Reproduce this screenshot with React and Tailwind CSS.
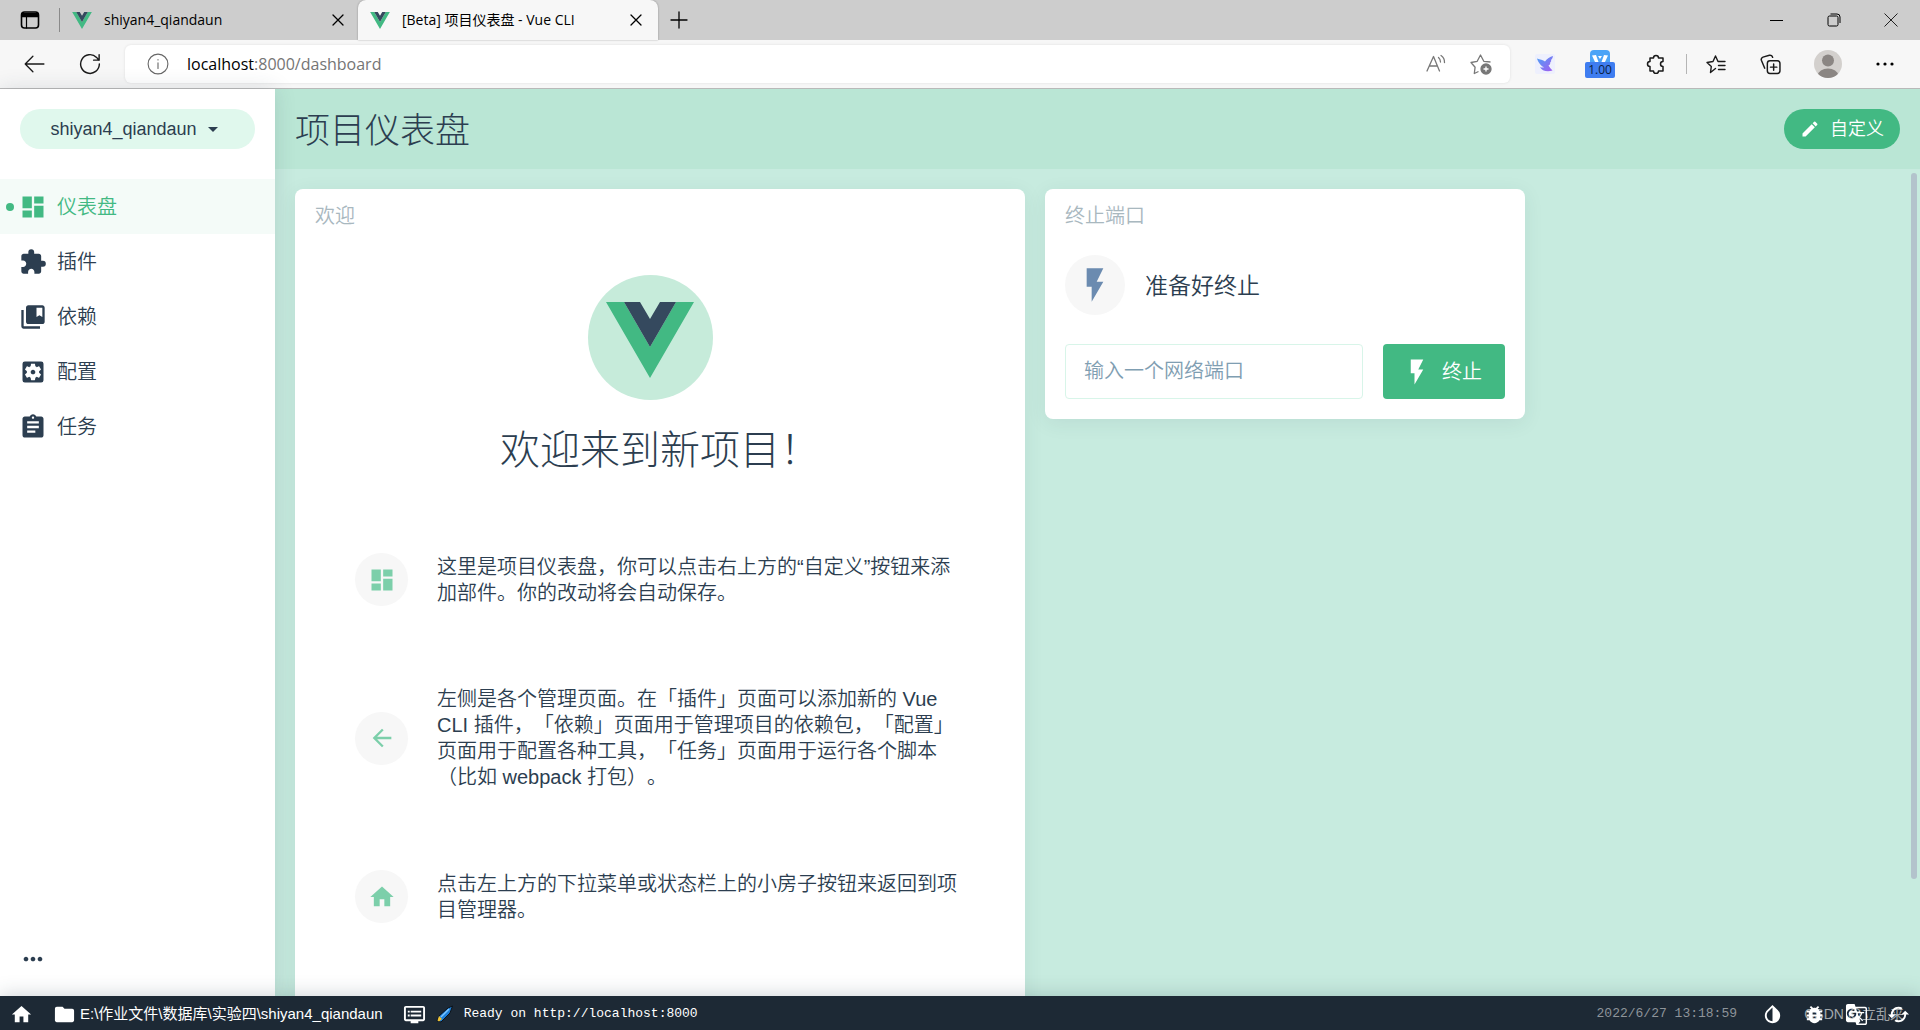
import React, { useState } from "react";
import {
  MdDashboard,
  MdExtension,
  MdCollectionsBookmark,
  MdSettingsApplications,
  MdAssignment,
  MdMoreHoriz,
  MdHome,
  MdFolder,
  MdDvr,
  MdInvertColors,
  MdBugReport,
  MdGTranslate,
  MdCached,
  MdEdit,
  MdFlashOn,
  MdArrowBack,
  MdArrowDropDown,
} from "react-icons/md";

const menu = [
  { id: "dashboard", label: "仪表盘", icon: MdDashboard },
  { id: "plugins", label: "插件", icon: MdExtension },
  { id: "dependencies", label: "依赖", icon: MdCollectionsBookmark },
  { id: "configuration", label: "配置", icon: MdSettingsApplications },
  { id: "tasks", label: "任务", icon: MdAssignment },
];

const tips = [
  {
    id: 1,
    icon: MdDashboard,
    text: "这里是项目仪表盘，你可以点击右上方的“自定义”按钮来添加部件。你的改动将会自动保存。",
  },
  {
    id: 2,
    icon: MdArrowBack,
    text: "左侧是各个管理页面。在「插件」页面可以添加新的 Vue CLI 插件，「依赖」页面用于管理项目的依赖包，「配置」页面用于配置各种工具，「任务」页面用于运行各个脚本（比如 webpack 打包）。",
  },
  {
    id: 3,
    icon: MdHome,
    text: "点击左上方的下拉菜单或状态栏上的小房子按钮来返回到项目管理器。",
  },
];

const VueLogo = ({ className }) => (
  <svg viewBox="0 0 88 76" className={className} aria-hidden="true">
    <path d="M0 0h18l26 45L70 0h18L44 76z" fill="#42b983" />
    <path d="M18 0h16l10 17L54 0h16L44 45z" fill="#35495e" />
  </svg>
);

// thin stroked icon used in the browser bar
const Line = ({ size = 20, width = 1.3, children }) => (
  <svg
    width={size}
    height={size}
    viewBox="0 0 20 20"
    fill="none"
    stroke="currentColor"
    strokeWidth={width}
    strokeLinecap="round"
    strokeLinejoin="round"
    aria-hidden="true"
  >
    {children}
  </svg>
);

const CloseIcon = ({ size = 20 }) => (
  <Line size={size}>
    <path d="M5 5l10 10M15 5L5 15" />
  </Line>
);

const TabBar = () => (
  <div className="flex h-10 shrink-0 items-stretch bg-[#cdcdcd] text-sm text-black">
    <button aria-label="Tab actions" className="flex w-[59px] items-center justify-center">
      <Line size={20} width={1.6}>
        <rect x="1.5" y="2" width="17" height="16" rx="3" />
        <path d="M2 3.5h16v3H2z" fill="currentColor" />
        <path d="M6.5 7v11" strokeWidth="1.2" />
      </Line>
    </button>
    <div className="my-2 w-px bg-[#8a8a8a]" />
    <div className="flex w-[298px] items-center pr-2.5 pl-3">
      <VueLogo className="h-[17px] w-5" />
      <span className="ml-3 flex-1">shiyan4_qiandaun</span>
      <button aria-label="Close tab">
        <CloseIcon />
      </button>
    </div>
    <div className="flex w-[300px] items-center rounded-t-lg bg-[#f7f7f7] px-3 shadow-[0_0_2px_rgba(0,0,0,0.35)]">
      <VueLogo className="h-[17px] w-5" />
      <span className="ml-3 flex-1">[Beta] 项目仪表盘 - Vue CLI</span>
      <button aria-label="Close tab">
        <CloseIcon />
      </button>
    </div>
    <button aria-label="New tab" className="flex w-[42px] items-center justify-center">
      <Line>
        <path d="M10 2v16M2 10h16" />
      </Line>
    </button>
    <div className="ml-auto flex">
      <button aria-label="Minimize" className="flex w-[57px] items-center justify-center">
        <svg width="13" height="13" viewBox="0 0 13 13" stroke="#000">
          <path d="M0 6.5h13" />
        </svg>
      </button>
      <button aria-label="Restore" className="flex w-[57px] items-center justify-center">
        <svg width="14" height="14" viewBox="0 0 14 14" fill="none" stroke="#000">
          <rect x="1" y="3" width="10" height="10" rx="1.5" />
          <path d="M3.5 1H10a3 3 0 0 1 3 3v6" />
        </svg>
      </button>
      <button aria-label="Close window" className="flex w-[58px] items-center justify-center">
        <svg width="14" height="14" viewBox="0 0 14 14" stroke="#222">
          <path d="M.5.5l13 13M13.5.5l-13 13" />
        </svg>
      </button>
    </div>
  </div>
);

const AddressBar = () => (
  <div className="flex h-[49px] shrink-0 items-center border-b border-[#b9b9b9] bg-[#f7f7f7] text-[#1a1a1a]">
    <button aria-label="Back" className="ml-4 flex w-9 justify-center">
      <Line size={22} width={1.2}>
        <path d="M19 10H2M9 3l-7 7 7 7" />
      </Line>
    </button>
    <button aria-label="Refresh" className="ml-5 flex w-9 justify-center">
      <Line size={22} width={1.3}>
        <path d="M18.5 10a8.5 8.5 0 1 1-2.5-6l2 2.5M18.3 1.5v5h-5" />
      </Line>
    </button>
    <div className="ml-[17px] flex h-[38px] flex-1 items-center rounded-md bg-white pr-[18px] pl-[22px] shadow-[0_0_3px_rgba(0,0,0,0.1)]">
      <span className="text-[#666]">
        <Line size={22} width={1}>
          <circle cx="10" cy="10" r="9" />
          <path d="M10 9v5M10 6v.3" />
        </Line>
      </span>
      <span className="ml-[18px] flex-1 text-base text-[#757575]">
        <span className="text-black">localhost</span>:8000/dashboard
      </span>
      <button aria-label="Read aloud" className="mr-6 text-[#777]">
        <Line>
          <path d="M1 17L7.5 2.5 13.5 17M3.3 12h8.2M12.5 3.5a6 6 0 0 1 2 4.5M15 1.5a8 8 0 0 1 3.5 7" />
        </Line>
      </button>
      <button aria-label="Add to favorites" className="text-[#777]">
        <svg width="22" height="22" viewBox="0 0 22 22" fill="none" stroke="currentColor" strokeWidth="1.3" strokeLinejoin="round">
          <path d="M8.5 18.5L4.3 20.5l.8-6.3L1 9.5l6.2-1.2L10.5 2l3.3 6.3L20.5 9" />
          <circle cx="16" cy="16" r="5" fill="currentColor" />
          <path d="M16 13.5v5M13.5 16h5" stroke="#fff" />
        </svg>
      </button>
    </div>
    <div className="flex items-center">
      <button aria-label="Bird extension" className="ml-[25px] flex h-5 w-5 items-center justify-center rounded-xs bg-[#eef0fd]">
        <svg width="18" height="18" viewBox="0 0 18 18">
          <defs>
            <linearGradient id="bird" x1="0" y1="0" x2="1" y2="1">
              <stop offset="0" stopColor="#4aa3f5" />
              <stop offset="1" stopColor="#a45cf0" />
            </linearGradient>
          </defs>
          <path
            d="M1 3.5C4 4.5 7 5 9 6.5 11 3.5 14 2 17 1c-.3 2-1 3-2 4 .5 1 .2 1.5-.8 2.5.3 1.500-.7 2.500-1.700 3 1.200 2 2.500 3.500 4 5-5 1.500-11 .5-12.500-3.500 1.500.7 3 .7 4 .2C5.500 11.500 2.500 8 1 3.500z"
            fill="url(#bird)"
          />
        </svg>
      </button>
      <button aria-label="Speed extension" className="ml-[30px] flex w-[30px] flex-col items-center">
        <svg width="20" height="12" viewBox="0 0 20 12">
          <path d="M0 12V4a4 4 0 0 1 4-4h12a4 4 0 0 1 4 4v8z" fill="#4ba4f7" />
          <path d="M2 5.500l4-.5 2.500 7H5zM18 5.500L14 5l-2.500 7H15z" fill="#fff" />
          <path d="M8 6h4l-2 3z" fill="#fff" />
        </svg>
        <span className="w-full rounded-xs bg-[#3f7df0] text-xs leading-4 text-[#0a1f44]">1.00</span>
      </button>
      <button aria-label="Extensions" className="ml-[31px]">
        <Line size={20} width={1.5}>
          <path d="M4 4h3.500a2.500 2.500 0 0 1 5 0H17v3.500a2.500 2.500 0 1 0 0 5V17h-4.500a2.500 2.500 0 0 1-5 0H4v-4.500a2.500 2.500 0 0 1 0-5z" />
        </Line>
      </button>
      <div className="ml-5 h-5 w-px bg-[#b5b5b5]" />
      <button aria-label="Favorites" className="ml-[19px]">
        <Line size={20} width={1.4}>
          <path d="M9.500 14.500L4.500 18.500l.8-6L1 8.500l6-1L9.500 2l2.500 5.500h7M12.500 11.500H19M12.500 15.500H19" />
        </Line>
      </button>
      <button aria-label="Collections" className="ml-[34px]">
        <Line size={21} width={1.4}>
          <rect x="7" y="6.500" width="12" height="12" rx="2.500" />
          <path d="M13 9.500v6M10 12.500h6M4.500 13.500L1.300 6a2.500 2.500 0 0 1 1.500-3L9 1.200a2.500 2.500 0 0 1 3 2" />
        </Line>
      </button>
      <button aria-label="Profile" className="ml-[33px]">
        <svg width="28" height="28" viewBox="0 0 28 28">
          <clipPath id="face">
            <circle cx="14" cy="14" r="14" />
          </clipPath>
          <g clipPath="url(#face)">
            <path d="M0 0h28v28H0z" fill="#d3d0cd" />
            <circle cx="14" cy="10.500" r="6" fill="#8b8683" />
            <ellipse cx="14" cy="25" rx="10" ry="6.500" fill="#8b8683" />
          </g>
        </svg>
      </button>
      <button aria-label="Menu" className="mr-[26px] ml-[34px]">
        <svg width="18" height="4" viewBox="0 0 18 4">
          <circle cx="2" cy="2" r="1.6" />
          <circle cx="9" cy="2" r="1.6" />
          <circle cx="16" cy="2" r="1.6" />
        </svg>
      </button>
    </div>
  </div>
);

const SideBar = ({ active, onSelect }) => (
  <aside className="z-10 flex w-[275px] shrink-0 flex-col bg-white shadow-[0_0_20px_rgba(44,62,80,0.15)]">
    <button className="mx-5 mt-5 flex h-10 items-center justify-center rounded-full bg-[#e0f8ed] text-lg">
      shiyan4_qiandaun
      <MdArrowDropDown size={24} className="ml-1" />
    </button>
    <nav className="mt-[30px]">
      {menu.map(({ id, label, icon: Icon }) => (
        <button
          key={id}
          onClick={() => onSelect(id)}
          className={
            active === id
              ? "flex h-[55px] w-full items-center bg-[#f4fbf8] text-xl font-[350] text-[#42b983]"
              : "flex h-[55px] w-full items-center text-xl font-[350]"
          }
        >
          <span
            className={active === id ? "ml-1.5 h-2 w-2 rounded-full bg-[#42b983]" : "ml-1.5 h-2 w-2"}
          />
          <Icon size={28} className="ml-[5px]" />
          <span className="ml-2.5">{label}</span>
        </button>
      ))}
    </nav>
    <button aria-label="更多" className="mt-auto mb-[23px] ml-[19px] self-start">
      <MdMoreHoriz size={28} />
    </button>
  </aside>
);

const Welcome = () => (
  <section className="w-[730px] shrink-0 rounded-lg bg-white px-5 pb-5 shadow-[0_4px_20px_rgba(44,62,80,0.08)]">
    <h2 className="pt-3 text-xl leading-[30px] font-[350] text-[#a9b8bf]">欢迎</h2>
    <div className="mt-11 flex flex-col items-center">
      <div className="mr-5 flex h-[125px] w-[125px] items-center justify-center rounded-full bg-[#c6ebda]">
        <VueLogo className="mt-1 h-[76px] w-[88px]" />
      </div>
      <h1 className="mt-5 text-[40px] leading-[60px] font-light">欢迎来到新项目！</h1>
    </div>
    <ul className="mt-[60px] pr-[45px] pl-10">
      {tips.map(({ id, icon: Icon, text }) => (
        <li key={id} className="mb-[54px] flex items-center py-[13px]">
          <div className="flex h-[53px] w-[53px] shrink-0 items-center justify-center rounded-full bg-[#f7f7f7]">
            <Icon size={28} className="text-[#7ccfaa]" />
          </div>
          <p className="ml-[29px] text-xl leading-[26px] font-[350] [text-spacing-trim:space-all]">{text}</p>
        </li>
      ))}
    </ul>
  </section>
);

const KillPort = () => {
  const [port, setPort] = useState("");

  return (
    <section className="w-[480px] shrink-0 rounded-lg bg-white px-5 pb-5 shadow-[0_4px_20px_rgba(44,62,80,0.08)]">
      <h2 className="pt-3 text-xl leading-[30px] font-[350] text-[#a9b8bf]">终止端口</h2>
      <div className="mt-6 flex items-center">
        <div className="flex h-[60px] w-[60px] items-center justify-center rounded-full bg-[#f7f7f7]">
          <MdFlashOn size={40} className="text-[#6b8bb0]" />
        </div>
        <span className="ml-5 pt-0.5 text-[23px] font-[350]">准备好终止</span>
      </div>
      <form className="mt-[29px] flex gap-5" onSubmit={(e) => e.preventDefault()}>
        <input
          type="text"
          aria-label="网络端口"
          placeholder="输入一个网络端口"
          value={port}
          onChange={(e) => setPort(e.target.value)}
          className="h-[55px] min-w-0 flex-1 rounded-sm border border-[#d8f5e9] px-[18px] text-xl font-[350] outline-none placeholder:text-[#7f9eb2]"
        />
        <button className="flex h-[55px] w-[122px] items-center justify-center rounded-sm bg-[#42b983] pr-1 text-xl font-[350] text-white">
          <MdFlashOn size={30} className="mr-2.5" />
          终止
        </button>
      </form>
    </section>
  );
};

const StatusBar = () => (
  <footer className="relative z-20 flex h-[34px] shrink-0 items-center bg-[#1d2935] pt-0.5 text-white shadow-[0_0_20px_rgba(44,62,80,0.25)]">
    <button aria-label="项目管理器" className="ml-2.5">
      <MdHome size={23} />
    </button>
    <button className="ml-5 flex items-center text-[15px]">
      <MdFolder size={23} />
      <span className="ml-1">E:\作业文件\数据库\实验四\shiyan4_qiandaun</span>
    </button>
    <button className="ml-5 flex items-center font-['Liberation_Mono','Noto_Sans_CJK_SC',monospace] text-[13px]">
      <MdDvr size={23} />
      <svg width="18" height="18" viewBox="0 0 18 18" className="ml-2.5" aria-hidden="true">
        <path d="M16.500 1L12 3 3 11l-2 5 4 1 9-9z" fill="#1d7fd8" stroke="#0c1218" />
        <path d="M13 4L5 12" stroke="#7cc6ff" strokeWidth="1.5" />
        <path d="M3 11l3 3-3 2.500-1.500-1z" fill="#f2c230" />
      </svg>
      <span className="ml-2.5">Ready on http://localhost:8000</span>
    </button>
    <span className="ml-auto font-['Liberation_Mono',monospace] text-[13px] text-[#8e949a]">
      2022/6/27 13:18:59
    </span>
    <div className="mr-2.5 ml-6 flex gap-[19px]">
      <button aria-label="主题">
        <MdInvertColors size={23} />
      </button>
      <button aria-label="报告问题">
        <MdBugReport size={23} />
      </button>
      <button aria-label="翻译">
        <MdGTranslate size={23} />
      </button>
      <button aria-label="刷新">
        <MdCached size={23} />
      </button>
    </div>
    <span className="absolute right-4 text-sm text-white/60">CSDN @立乱来</span>
  </footer>
);

export default function App() {
  const [active, setActive] = useState("dashboard");

  return (
    <div className="flex h-screen flex-col overflow-hidden bg-[#c7ebdf] font-['Liberation_Sans','Noto_Sans_CJK_SC',sans-serif] text-[#2c3e50]">
      <div className="font-['Open_Sans','Noto_Sans_CJK_SC',sans-serif]">
        <TabBar />
        <AddressBar />
      </div>
      <div className="flex min-h-0 flex-1">
        <SideBar active={active} onSelect={setActive} />
        <main className="flex min-w-0 flex-1 flex-col">
          <header className="flex h-20 shrink-0 items-center justify-between bg-[#bae6d5] px-5">
            <h1 className="pt-1 text-[35px] font-light">项目仪表盘</h1>
            <button className="flex h-10 items-center rounded-full bg-[#42b983] px-4 text-lg font-[350] text-white">
              <MdEdit size={20} className="mr-2.5" />
              自定义
            </button>
          </header>
          <div className="relative flex min-h-0 flex-1 items-start gap-5 overflow-hidden p-5">
            <Welcome />
            <KillPort />
            <div className="absolute top-1 right-[3px] h-[706px] w-1.5 rounded-full bg-[#b3c3cc]" />
          </div>
        </main>
      </div>
      <StatusBar />
    </div>
  );
}
